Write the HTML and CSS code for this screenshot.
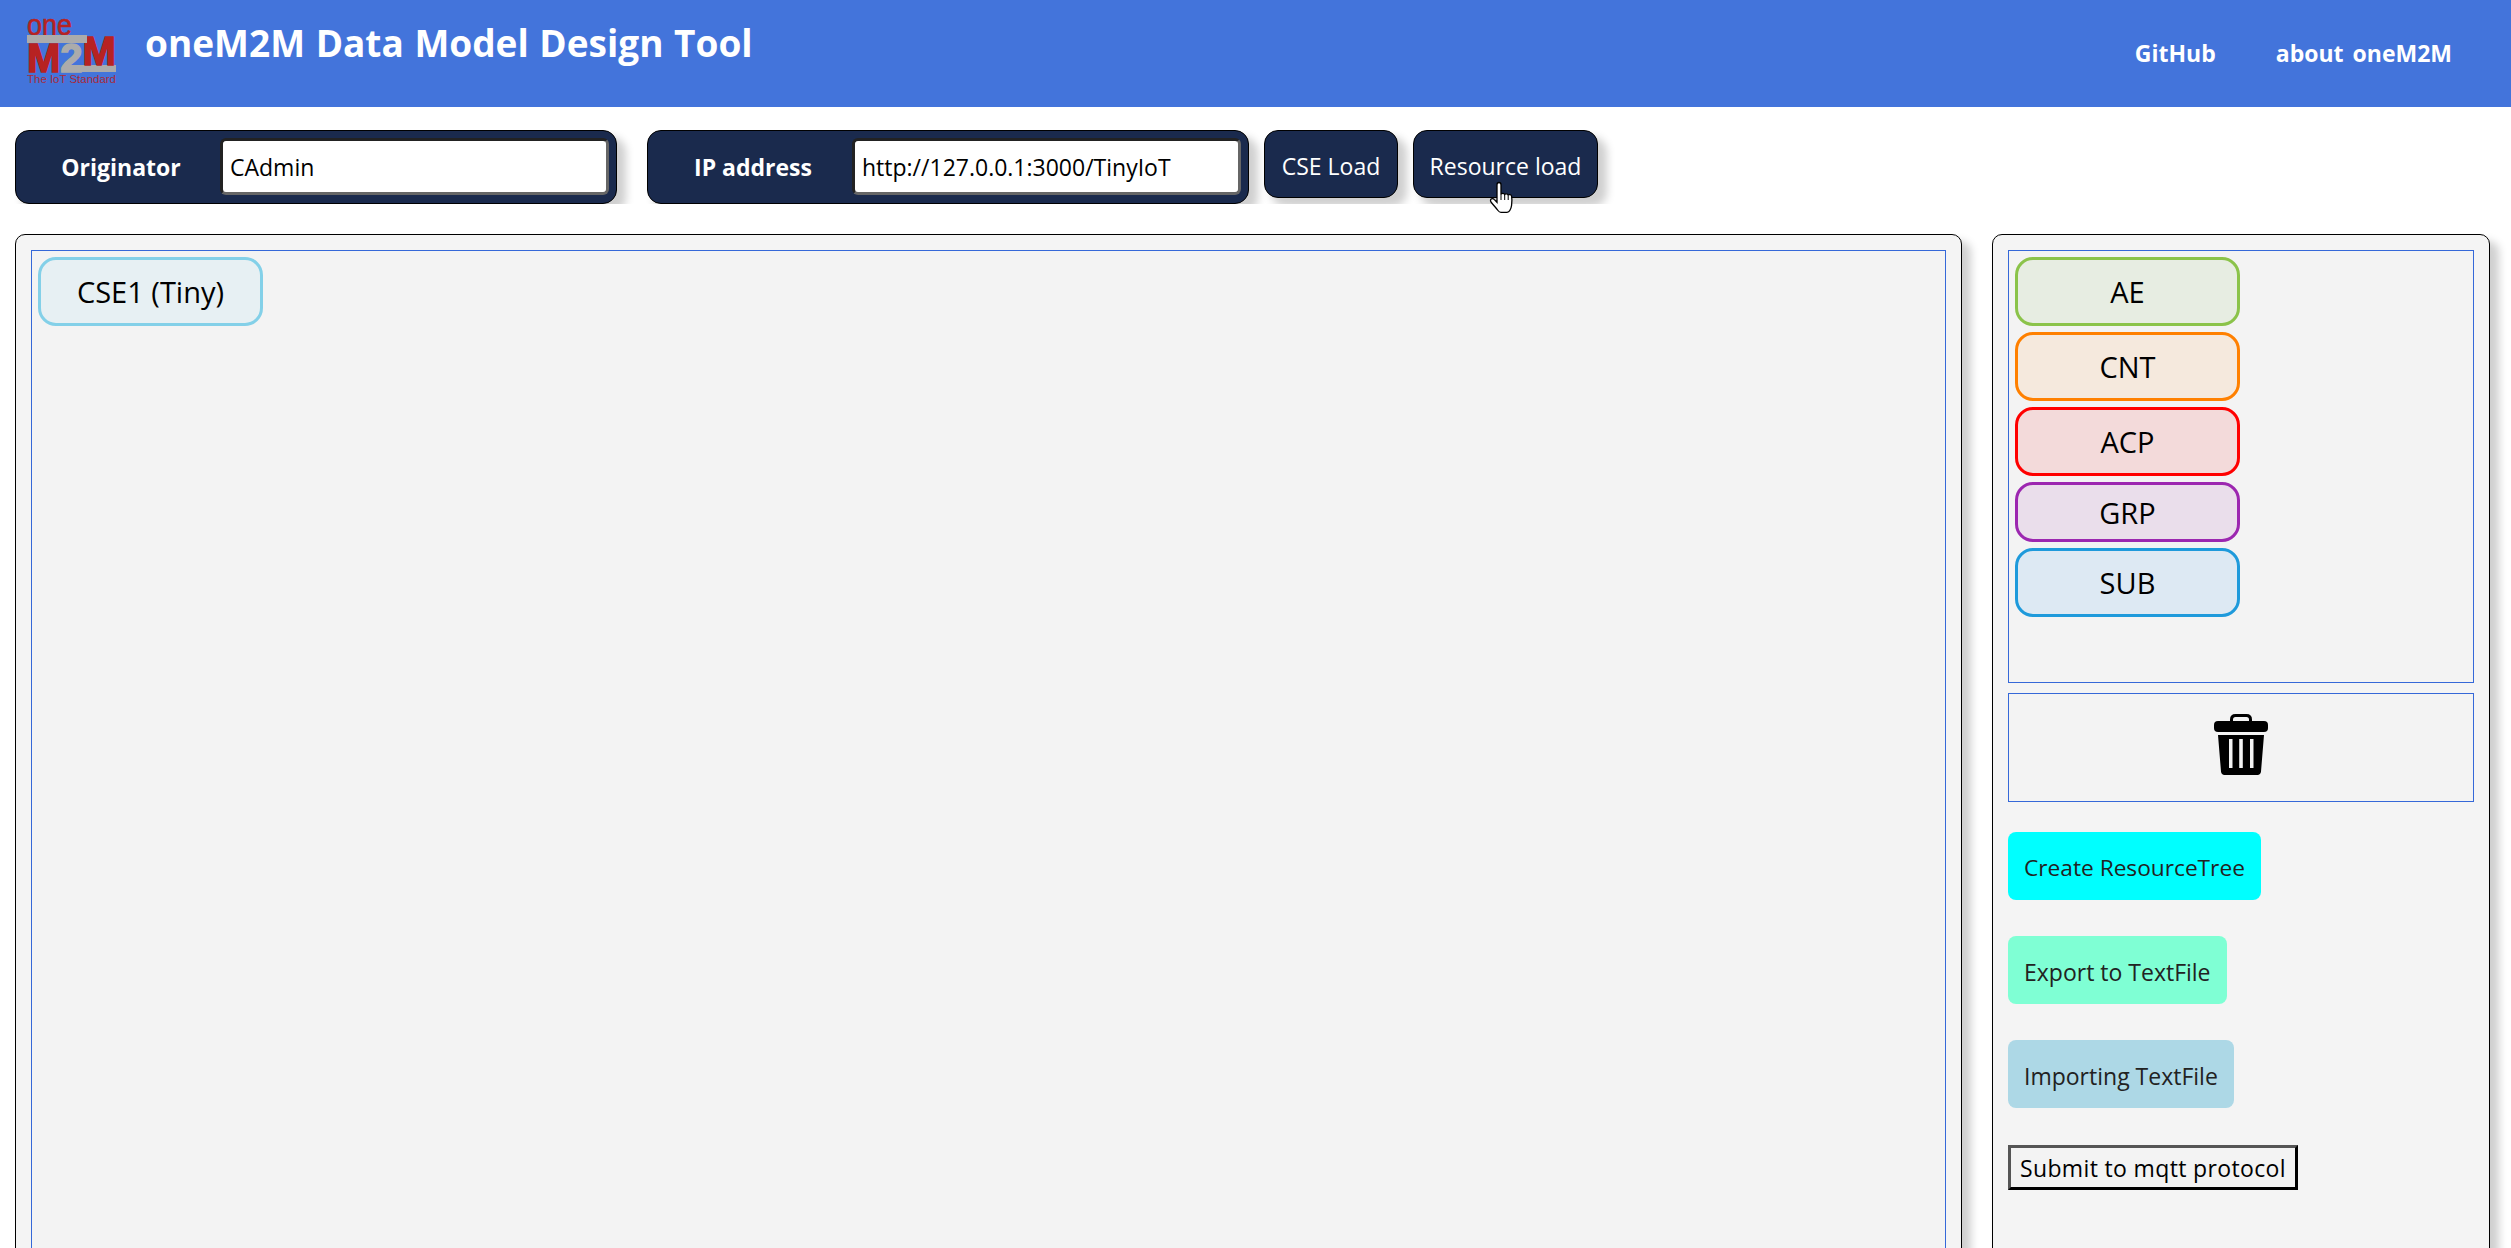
FILE: index.html
```html
<!DOCTYPE html>
<html lang="en">
<head>
  <meta charset="UTF-8" />
  <meta name="viewport" content="width=device-width, initial-scale=1" />
  <title>oneM2M Data Model Design Tool</title>
  <link rel="stylesheet" href="styles.css">
</head>
<body>
  <header class="topbar">
    <svg class="logo" width="90" height="68" viewBox="0 0 90 68">
      <text class="logo-one" x="0" y="17" textLength="45" lengthAdjust="spacingAndGlyphs">one</text>
      <rect x="38" y="47" width="51" height="7" fill="#ababab"/>
      <text class="logo-m" x="0" y="54" textLength="89" lengthAdjust="spacingAndGlyphs">M<tspan class="logo-two">2</tspan><tspan dy="-7">M</tspan></text>
      <rect x="0" y="17" width="60" height="8" fill="#ababab"/>
      <text class="logo-tag" x="0" y="65" textLength="89" lengthAdjust="spacingAndGlyphs">The IoT Standard</text>
    </svg>
    <h1 class="title">oneM2M Data Model Design Tool</h1>
    <nav class="nav">
      <a class="nav-link">GitHub</a>
      <a class="nav-link">about oneM2M</a>
    </nav>
  </header>

  <div class="toolbar">
    <div class="field field-orig">
      <label class="field-label">Originator</label>
      <input class="field-input" type="text" value="CAdmin" />
    </div>
    <div class="field field-ip">
      <label class="field-label">IP address</label>
      <input class="field-input" type="text" value="http://127.0.0.1:3000/TinyIoT" />
    </div>
    <button class="load-btn load-cse">CSE Load</button>
    <button class="load-btn load-res">Resource load
      <svg class="cursor" width="27" height="33" viewBox="0 0 27 33">
        <path d="M10 1.500c1.300 0 2 1 2 2.200v9.500c.4-1 3.200-1.200 3.700.3.6-1 3-1 3.500.6.8-.8 3-.6 3.400 1.100.3 1.500.3 6 0 9-.3 2.500-1 4-1.800 5.300-.5 1-1.200 1.800-2.800 1.800h-6c-1.500 0-2.300-.8-3-1.800-1.800-2.500-5-5.800-7-8.500-.8-1.200-.6-2.500.4-3.100 1-.6 2.200-.2 3 .7l2.600 2.700V3.700c0-1.200.7-2.200 2-2.200z" fill="#fff" stroke="#000" stroke-width="1.300"/>
        <path d="M12 13v6M15.700 13.500V19M19.200 14.500V19" fill="none" stroke="#000" stroke-width="1"/>
      </svg>
    </button>
  </div>

  <main class="workspace">
    <section class="panel panel-canvas">
      <div class="zone zone-canvas">
        <div class="chip chip-cse">CSE1 (Tiny)</div>
      </div>
    </section>

    <aside class="panel panel-side">
      <div class="zone zone-palette">
        <div class="chip chip-ae">AE</div>
        <div class="chip chip-cnt">CNT</div>
        <div class="chip chip-acp">ACP</div>
        <div class="chip chip-grp">GRP</div>
        <div class="chip chip-sub">SUB</div>
      </div>
      <div class="zone zone-trash">
        <svg class="trash" width="54" height="61" viewBox="0 0 54 61">
          <path d="M17.500 8V5.500C17.500 3 19 1.500 21.500 1.500h11c2.500 0 4 1.500 4 4V8" fill="none" stroke="#000" stroke-width="3"/>
          <rect x="0" y="7" width="54" height="11" rx="4" fill="#000"/>
          <path fill-rule="evenodd" d="M4 21h46l-3 36.500c-.2 2-1.500 3.500-3.500 3.500h-33c-2 0-3.300-1.500-3.500-3.500zM15 25v29h3.500V25zM25.200 25v29h3.600V25zM36 25v29h3.500V25z" fill="#000"/>
        </svg>
      </div>
      <button class="action action-create">Create ResourceTree</button>
      <button class="action action-export">Export to TextFile</button>
      <button class="action action-import">Importing TextFile</button>
      <button class="submit-btn">Submit to mqtt protocol</button>
    </aside>
  </main>
</body>
</html>
```

FILE: styles.css
```css
html, body {
  margin: 0;
  height: 100%;
  overflow: hidden;
}
body {
  font-family: "Open Sans", "Noto Sans", sans-serif;
  background: #fff;
  color: #000;
}

/* top bar */
.topbar {
  display: flex;
  height: 107px;
  background-color: #4374db;
  color: #fff;
  padding: 18px 59px 0 27px;
  box-sizing: border-box;
}
.logo {
  flex: none;
  overflow: visible;
}
.logo-one {
  font: 400 30px "Liberation Sans", sans-serif;
  stroke: #b72222;
  stroke-width: .6px;
  fill: #b72222;
}
.logo-m {
  font: 700 40px "Liberation Sans", sans-serif;
  stroke: #b72222;
  stroke-width: 1.500px;
  fill: #b72222;
}
.logo-two {
  stroke: #ababab;
  fill: #ababab;
}
.logo-tag {
  font: 400 11px "Liberation Sans", sans-serif;
  fill: #a92a3a;
}
.title {
  margin: 0 0 0 28px;
  font-size: 37px;
  line-height: 50px;
  font-weight: 700;
  word-spacing: 1px;
  white-space: nowrap;
}
.nav {
  margin-left: auto;
  display: flex;
  gap: 60px;
  padding-top: 18px;
}
.nav-link {
  font-size: 23px;
  line-height: 34px;
  font-weight: 700;
  word-spacing: 3px;
}

/* originator / ip row */
.toolbar {
  display: flex;
  height: 74px;
  margin-top: 23px;
  padding-left: 15px;
  overflow: hidden;
}
.field {
  display: flex;
  align-items: center;
  height: 74px;
  box-sizing: border-box;
  background-color: #1a2a4d;
  border: 1px solid #000;
  border-radius: 14px;
  box-shadow: 8px 8px 8px 1px #d0d0d0;
  color: #fff;
}
.field-orig {
  width: 602px;
  margin-right: 30px;
}
.field-ip {
  width: 602px;
  margin-right: 15px;
}
.field-label {
  width: 204px;
  flex: none;
  padding-left: 6px;
  box-sizing: border-box;
  text-align: center;
  font-size: 23px;
  font-weight: 700;
}
.field-input {
  width: 389px;
  height: 57px;
  box-sizing: border-box;
  margin-top: -1px;
  padding: 0 7px;
  border-width: 3px;
  border-style: solid;
  border-color: #222 #666 #666 #222;
  border-radius: 6px;
  background: #fff;
  font-family: inherit;
  font-size: 23px;
  color: #000;
}
.load-btn {
  position: relative;
  height: 68px;
  box-sizing: border-box;
  padding: 3px 0 0;
  background-color: #1a2a4d;
  border: 1px solid #000;
  border-radius: 14px;
  box-shadow: 8px 8px 8px 1px #d0d0d0;
  color: #fff;
  font-family: inherit;
  font-size: 23px;
}
.load-cse {
  width: 134px;
  margin-right: 15px;
}
.load-res {
  width: 185px;
}

/* mouse pointer in the shot, sits on the button */
.cursor {
  position: fixed;
  left: 1489px;
  top: 181px;
}

/* main panels */
.workspace {
  display: flex;
  gap: 30px;
  margin-top: 30px;
  padding-left: 15px;
}
.panel {
  box-sizing: border-box;
  height: 1200px;
  background-color: #f4f4f4;
  border: 1px solid #000;
  border-radius: 10px;
  box-shadow: 8px 8px 8px 1px #d0d0d0;
  padding: 15px;
}
.panel-canvas {
  width: 1947px;
}
.panel-side {
  width: 498px;
}
.zone {
  border: 1px solid #3568d8;
  box-sizing: border-box;
  background-color: #f3f3f3;
}
.zone-canvas {
  height: 1100px;
  padding: 6px;
}
.zone-palette {
  height: 433px;
  padding: 6px;
}
.zone-trash {
  height: 109px;
  margin-top: 10px;
  display: flex;
  align-items: center;
  justify-content: center;
}
.trash {
  margin-bottom: 6px;
}

/* draggable resource chips */
.chip {
  box-sizing: border-box;
  width: 225px;
  height: 69px;
  margin-bottom: 6px;
  display: flex;
  align-items: center;
  justify-content: center;
  border: 3px solid;
  border-radius: 18px;
  font-size: 29px;
}
.chip-cse { background: #e7f0f3; border-color: #83d0e8; }
.chip-ae { background: #e7ede2; border-color: #8bc34a; }
.chip-cnt { background: #f5e9dd; border-color: #ff8000; }
.chip-acp { background: #f3dada; border-color: #ff0000; }
.chip-grp { background: #eadeeb; border-color: #9c27b0; height: 60px; }
.chip-sub { background: #dde9f3; border-color: #1e9adb; }

/* side buttons */
.action {
  display: block;
  height: 68px;
  margin-top: 36px;
  padding: 3px 16px 0;
  border: none;
  border-radius: 8px;
  font-family: inherit;
  font-size: 23px;
  color: #222;
}
.action-create {
  margin-top: 30px;
  background-color: #00ffff;
  font-size: 22.700px;
}
.action-export {
  background-color: #7fffd4;
}
.action-import {
  background-color: #add8e6;
}
.submit-btn {
  display: block;
  height: 45px;
  margin-top: 37px;
  padding: 0 9px;
  background: #f3f3f3;
  border-width: 3px;
  border-style: solid;
  border-color: #555 #000 #000 #555;
  font-family: inherit;
  font-size: 23px;
  letter-spacing: .35px;
  color: #000;
}
```
